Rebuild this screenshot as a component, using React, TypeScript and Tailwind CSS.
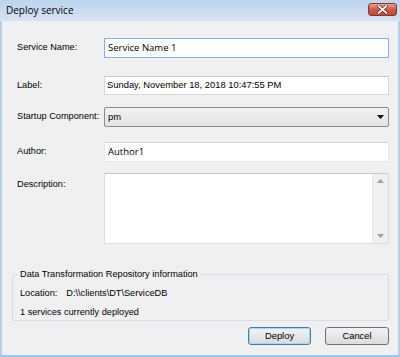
import React from "react";

const labelFont = { fontFamily: '"Liberation Sans", Arial, sans-serif' };

const Field = ({ label, children, className = "" }: { label: string; children: React.ReactNode; className?: string }) => (
  <div className={`flex items-center pl-[15px] pr-[9px] ${className}`}>
    <div className="w-[87px] shrink-0 text-[9.2px] text-black">{label}</div>
    <div className="flex-1">{children}</div>
  </div>
);

const DeployService = () => {
  return (
    <div
      className="w-[400px] h-[357px] flex flex-col bg-[#b4cfec] border-b-2 border-[#8ed2f2]"
      style={labelFont}
    >
      {/* title bar */}
      <div className="h-[21px] shrink-0 flex items-center justify-between pl-[6px] pr-[3px] bg-gradient-to-b from-[#bcd4ee] to-[#d6e4f3]">
        <span className="text-[10px] text-black" style={{ fontFamily: '"Open Sans", sans-serif' }}>
          Deploy service
        </span>
        <div className="w-[29px] h-[13px] mt-[-2px] flex items-center justify-center rounded-[3px] border border-[#8e3328] bg-gradient-to-b from-[#e3a393] via-[#cc5a46] to-[#c14a33]">
          <svg width="11" height="9" viewBox="0 0 11 9">
            <path d="M1.5 1 L9.5 8 M9.5 1 L1.5 8" stroke="#5a1e16" strokeWidth="3.2" strokeLinecap="round" />
            <path d="M1.5 1 L9.5 8 M9.5 1 L1.5 8" stroke="#ffffff" strokeWidth="1.8" strokeLinecap="round" />
          </svg>
        </div>
      </div>

      {/* body */}
      <div className="flex-1 mx-[2px] bg-[#f0f0f0] flex flex-col">
        <Field label="Service Name:" className="mt-[17px]">
          <div
            className="h-[20px] border border-[#7eb4ea] bg-white flex items-center pl-[3px] text-[9.5px]"
            style={{ fontFamily: '"Open Sans", sans-serif' }}
          >
            Service Name 1
          </div>
        </Field>

        <Field label="Label:" className="mt-[18px]">
          <div className="h-[19px] border border-[#d5d9df] border-t-[#c3c6cc] bg-white flex items-center pl-[2px] text-[9.4px]">
            Sunday, November 18, 2018 10:47:55 PM
          </div>
        </Field>

        <Field label="Startup Component:" className="mt-[12px]">
          <div className="h-[20px] border border-[#8a8a8a] rounded-[2px] bg-gradient-to-b from-[#f3f3f3] to-[#e2e2e2] flex items-center justify-between pl-[3px] pr-[4px] text-[9.4px]">
            <span>pm</span>
            <svg width="7" height="4" viewBox="0 0 7 4">
              <path d="M0 0 H7 L3.5 4 Z" fill="#000" />
            </svg>
          </div>
        </Field>

        <Field label="Author:" className="mt-[15px]">
          <div
            className="h-[20px] border border-[#e3e6ea] border-t-[#cfd2d7] bg-white flex items-center pl-[3px] text-[9.5px]"
            style={{ fontFamily: '"Open Sans", sans-serif' }}
          >
            Author1
          </div>
        </Field>

        <div className="flex pl-[15px] pr-[9px] mt-[11px]">
          <div className="w-[87px] shrink-0 text-[9.2px] pt-[5px]">Description:</div>
          <div className="flex-1 h-[71px] border border-[#dadde2] border-t-[#c6c9ce] bg-white flex">
            <div className="flex-1" />
            <div className="w-[16px] bg-[#f0f0f0] border-l border-[#e8e8e8] flex flex-col items-center justify-between py-[5px]">
              <svg width="7" height="4" viewBox="0 0 7 4">
                <path d="M0 4 H7 L3.5 0 Z" fill="#a0a0a0" />
              </svg>
              <svg width="7" height="4" viewBox="0 0 7 4">
                <path d="M0 0 H7 L3.5 4 Z" fill="#a0a0a0" />
              </svg>
            </div>
          </div>
        </div>

        {/* repository group */}
        <fieldset className="mt-[25px] ml-[10px] mr-[9px] h-[52px] border border-[#d8dee3] rounded-[3px] pl-[5px] text-[9.2px]">
          <legend className="px-[2px] leading-[11px]">Data Transformation Repository information</legend>
          <div className="flex mt-[7px] pl-[2px]">
            <span>Location:</span>
            <span className="ml-[9px]">D:\\clients\DT\ServiceDB</span>
          </div>
          <div className="mt-[5px] pl-[2px]">1 services currently deployed</div>
        </fieldset>

        <div className="flex justify-end gap-[14px] pr-[9px] mt-[6px]">
          <button className="w-[63px] h-[18px] rounded-[3px] border border-[#3c7fb1] bg-gradient-to-b from-[#f2f2f2] to-[#dcdcdc] text-[9.4px] flex items-center justify-center shadow-[inset_0_0_0_1px_#a6d6f5]">
            Deploy
          </button>
          <button className="w-[64px] h-[18px] rounded-[3px] border border-[#707070] bg-gradient-to-b from-[#f2f2f2] to-[#dcdcdc] text-[9.4px] flex items-center justify-center">
            Cancel
          </button>
        </div>
      </div>
    </div>
  );
};

export default function App() {
  return <DeployService />;
}
